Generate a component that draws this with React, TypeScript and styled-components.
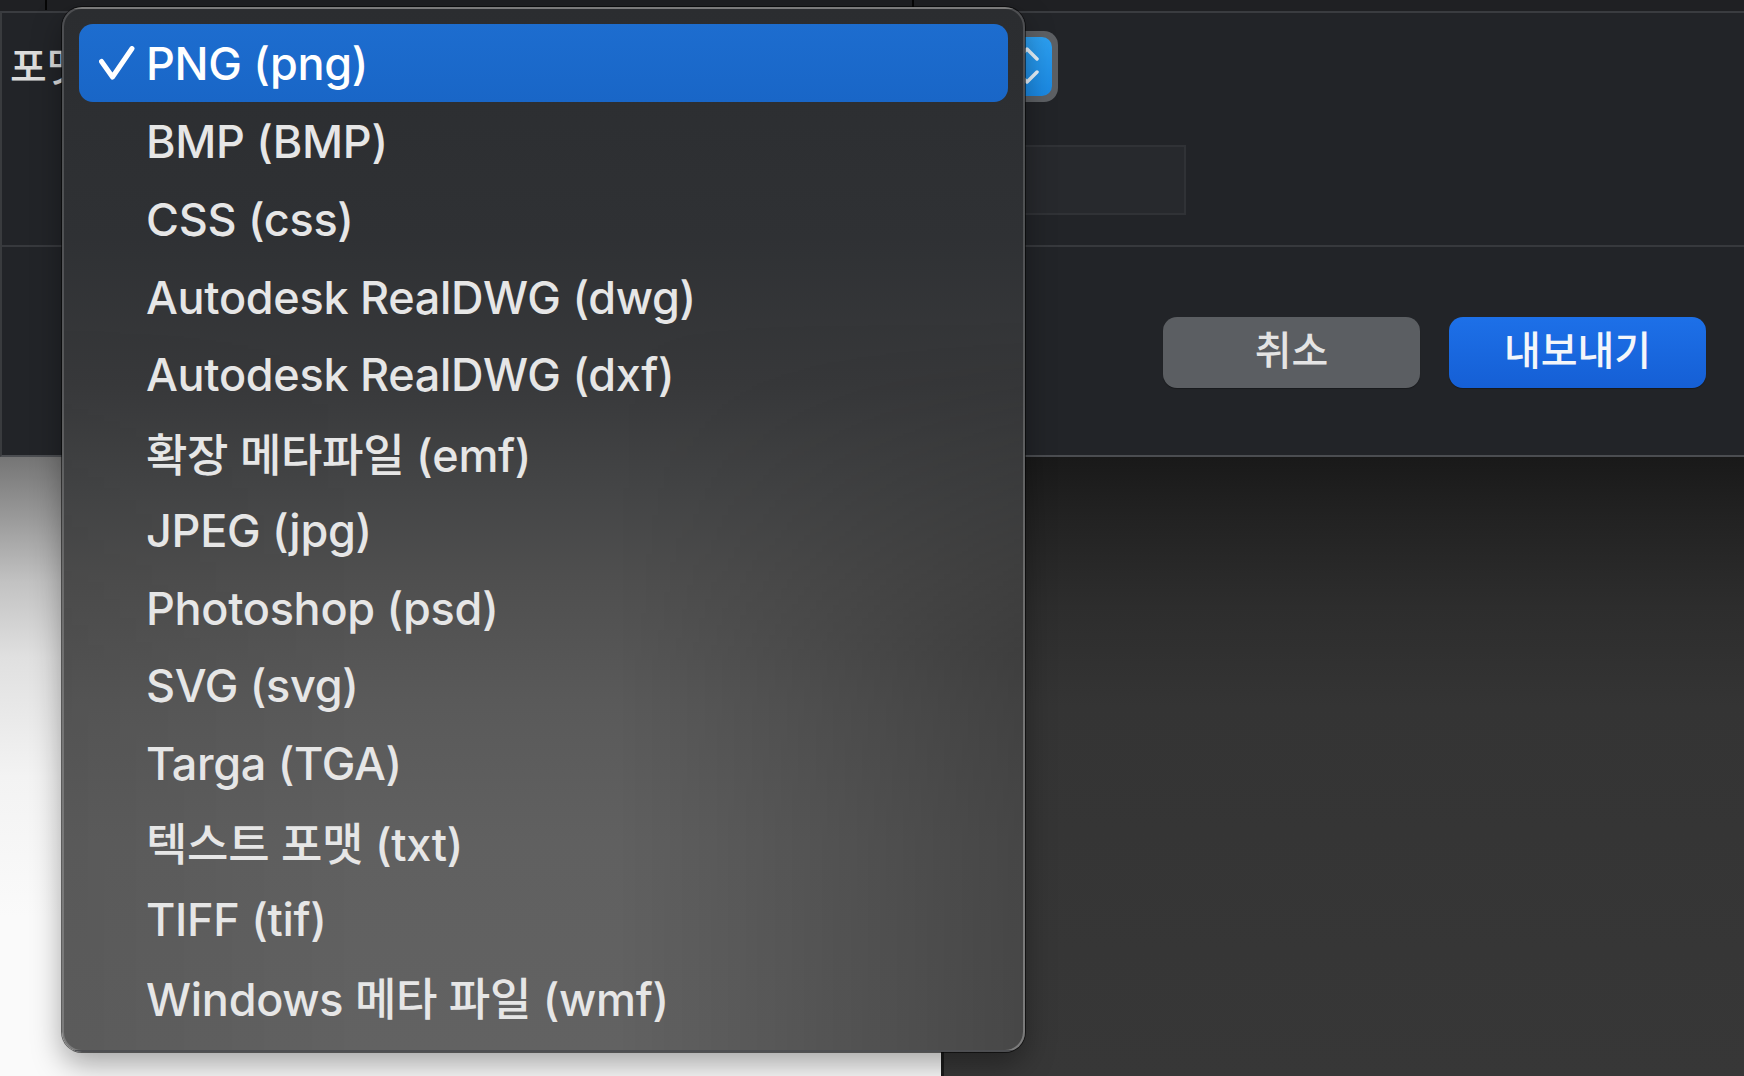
import React from "react";
import styled, { createGlobalStyle } from "styled-components";

const GlobalStyle = createGlobalStyle`
  html, body { margin: 0; padding: 0; background: #1f2023; }
  body {
    width: 1744px; height: 1076px; overflow: hidden;
    font-family: Inter, "Noto Sans CJK KR", sans-serif;
    -webkit-font-smoothing: antialiased;
  }
  * { box-sizing: border-box; }
`;

const Page = styled.div`
  position: relative;
  width: 1744px;
  height: 1076px;
  display: flex;
  flex-direction: column;
  overflow: hidden;
`;

const TitleStrip = styled.div`
  flex: none;
  height: 11px;
  background: #1f2023;
  display: flex;
  align-items: flex-start;
  padding-left: 45px;
  gap: 865px;
`;

const Tick = styled.span`
  width: 2px;
  height: 10px;
  background: #060606;
`;

const Sheet = styled.section`
  flex: none;
  height: 446px;
  background: #222428;
  border-top: 2px solid #3a3c40;
  border-bottom: 2px solid #4b4d51;
  border-left: 2px solid #393b3e;
  display: flex;
  flex-direction: column;
`;

const Form = styled.div`
  height: 234px;
  border-bottom: 2px solid #37393d;
  padding: 18px 0 0 8px;
  display: flex;
  flex-direction: column;
  gap: 43px;
`;

const FormRow = styled.div`
  display: flex;
  align-items: center;
  height: 71px;
`;

const Label = styled.span`
  width: 140px;
  font-size: 40px;
  font-weight: 500;
  color: #dcdcdc;
  margin-top: -6px;
`;

const PopupButton = styled.div`
  width: 908px;
  height: 71px;
  border-radius: 14px;
  background: #5d6064;
  display: flex;
  justify-content: flex-end;
  align-items: center;
  padding: 6px;
`;

const StepperCap = styled.div`
  width: 50px;
  height: 59px;
  border-radius: 10px;
  background: linear-gradient(#2c9ff0, #1a88e2);
  display: flex;
  align-items: center;
  justify-content: center;
`;

const TextField = styled.div`
  margin-left: 140px;
  width: 1036px;
  height: 70px;
  background: #27292d;
  border: 2px solid #303236;
`;

const ButtonBar = styled.div`
  flex: 1;
  display: flex;
  justify-content: flex-end;
  align-items: flex-start;
  gap: 29px;
  padding: 70px 38px 0 0;
`;

const DialogButton = styled.button<{ $primary?: boolean }>`
  width: 257px;
  height: 71px;
  border: none;
  border-radius: 14px;
  font-family: "Noto Sans CJK KR", Inter, sans-serif;
  font-size: 40px;
  font-weight: 500;
  line-height: 1;
  padding: 0 0 10px;
  color: ${(p) => (p.$primary ? "#f4f6fa" : "#e4e4e4")};
  background: ${(p) =>
    p.$primary ? "linear-gradient(#1d70e8, #155fd5)" : "#5b5e62"};
  box-shadow: 0 1px 1px rgba(0, 0, 0, 0.3);
`;

const Workspace = styled.div`
  flex: 1;
  display: flex;
`;

const Canvas = styled.div`
  width: 941px;
  background: linear-gradient(
    to bottom,
    #757575 0px,
    #999999 60px,
    #c2c2c2 125px,
    #e0e0e0 200px,
    #f3f3f3 320px,
    #fafafa 460px
  );
`;

const DarkArea = styled.div`
  flex: 1;
  border-left: 3px solid #1b1b1b;
  background: linear-gradient(
    to bottom,
    #191919 0px,
    #222222 60px,
    #2d2d2d 150px,
    #343434 250px,
    #373737 100%
  );
`;

const Menu = styled.ul`
  position: absolute;
  left: 62px;
  top: 7px;
  width: 963px;
  height: 1045px;
  margin: 0;
  padding: 15px;
  list-style: none;
  border-radius: 20px;
  border: 2px solid rgba(255, 255, 255, 0.16);
  background: linear-gradient(
    to bottom,
    #2b2d30 0%,
    #2f3134 22%,
    #38393b 36%,
    #444546 46%,
    #4f4f4f 55%,
    #5a5a5a 67%,
    #606060 80%,
    #626262 100%
  );
  box-shadow: 0 0 0 1px rgba(0, 0, 0, 0.55), 0 12px 30px rgba(0, 0, 0, 0.35);

  &::before {
    content: "";
    position: absolute;
    inset: 0;
    border-radius: 18px;
    pointer-events: none;
    background: linear-gradient(
      to right,
      rgba(0, 0, 0, 0.07) 0%,
      rgba(0, 0, 0, 0) 30%,
      rgba(0, 0, 0, 0) 58%,
      rgba(0, 0, 0, 0.27) 100%
    );
    -webkit-mask-image: linear-gradient(to bottom, transparent 30%, black 62%);
    mask-image: linear-gradient(to bottom, transparent 30%, black 62%);
  }
`;

const MenuItem = styled.li<{ $selected?: boolean }>`
  position: relative;
  z-index: 1;
  height: 77.75px;
  display: grid;
  grid-template-columns: 67px 1fr;
  align-items: center;
  border-radius: 14px;
  font-size: 45px;
  font-weight: 500;
  letter-spacing: -0.3px;
  white-space: nowrap;
  color: ${(p) => (p.$selected ? "#ffffff" : "#e6e6e6")};
  background: ${(p) =>
    p.$selected ? "linear-gradient(#1d6dcf, #1966c7)" : "transparent"};
`;

const CheckCell = styled.span`
  display: flex;
  align-items: center;
  padding-left: 20px;
`;

const ItemLabel = styled.span`
  padding-top: 2px;
`;

const items = [
  "PNG (png)",
  "BMP (BMP)",
  "CSS (css)",
  "Autodesk RealDWG (dwg)",
  "Autodesk RealDWG (dxf)",
  "확장 메타파일 (emf)",
  "JPEG (jpg)",
  "Photoshop (psd)",
  "SVG (svg)",
  "Targa (TGA)",
  "텍스트 포맷 (txt)",
  "TIFF (tif)",
  "Windows 메타 파일 (wmf)",
];

const CheckMark = () => (
  <svg width="36" height="34" viewBox="0 0 36 34" fill="none">
    <path
      d="M2.5 15.5 L13.5 31 L33 2.5"
      stroke="#ffffff"
      strokeWidth="5"
      strokeLinecap="round"
      strokeLinejoin="round"
    />
  </svg>
);

const Chevrons = () => (
  <svg width="50" height="59" viewBox="0 0 50 59" fill="none">
    <path
      d="M15 22 L25 12 L35 22 M15 35 L25 45 L35 35"
      stroke="rgba(255,255,255,0.9)"
      strokeWidth="3.5"
      strokeLinecap="round"
      strokeLinejoin="round"
    />
  </svg>
);

export default function App() {
  return (
    <>
      <GlobalStyle />
      <Page>
        <TitleStrip>
          <Tick />
          <Tick />
        </TitleStrip>
        <Sheet>
          <Form>
            <FormRow>
              <Label>포맷:</Label>
              <PopupButton>
                <StepperCap>
                  <Chevrons />
                </StepperCap>
              </PopupButton>
            </FormRow>
            <TextField />
          </Form>
          <ButtonBar>
            <DialogButton>취소</DialogButton>
            <DialogButton $primary>내보내기</DialogButton>
          </ButtonBar>
        </Sheet>
        <Workspace>
          <Canvas />
          <DarkArea />
        </Workspace>
        <Menu>
          {items.map((label, i) => (
            <MenuItem key={label} $selected={i === 0}>
              <CheckCell>{i === 0 ? <CheckMark /> : null}</CheckCell>
              <ItemLabel>{label}</ItemLabel>
            </MenuItem>
          ))}
        </Menu>
      </Page>
    </>
  );
}
